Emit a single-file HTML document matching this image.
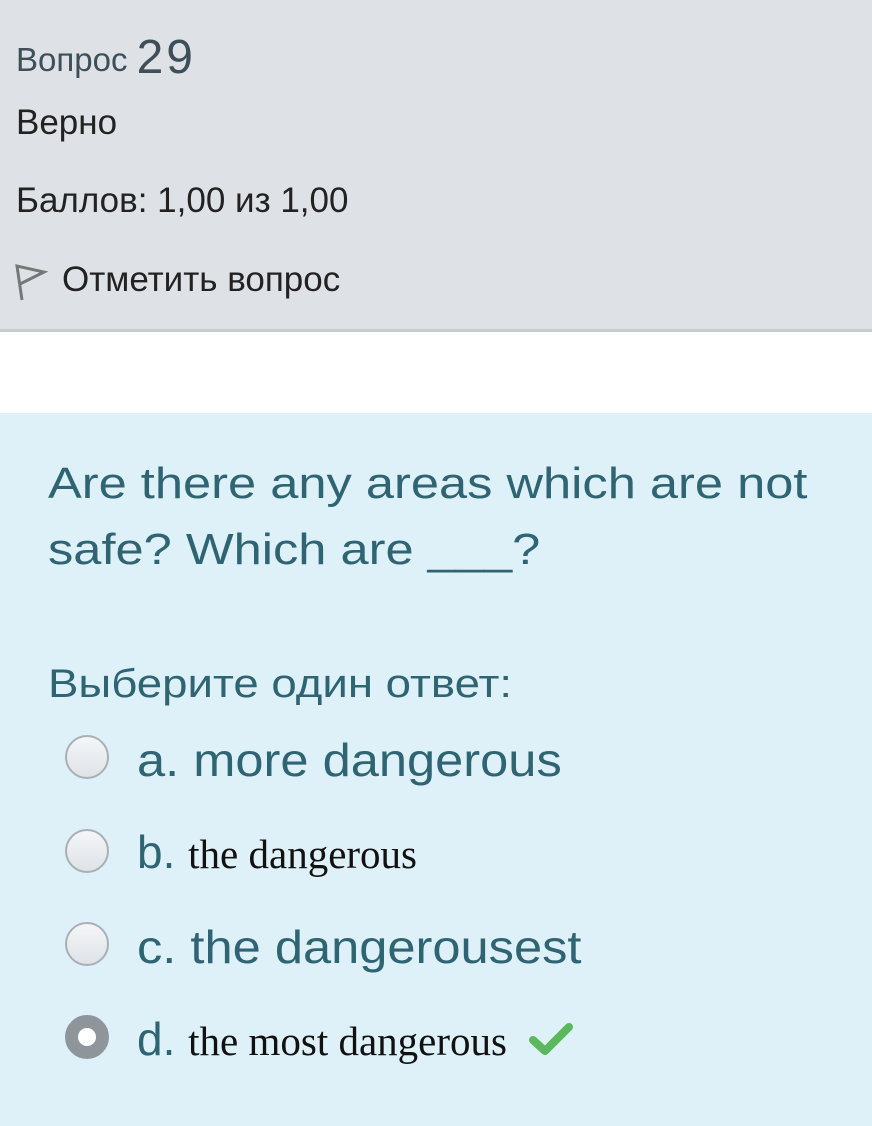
<!DOCTYPE html>
<html><head><meta charset="utf-8"><style>
*{margin:0;padding:0;box-sizing:border-box}
body{width:872px;height:1126px;overflow:hidden;background:#fff;font-family:"Liberation Sans",sans-serif;position:relative}
.hdr{position:absolute;left:0;top:0;width:872px;height:332px;background:#dee2e6;border-bottom:3px solid #c8ccd0}
.t{position:absolute;white-space:nowrap;line-height:1;transform-origin:left center}
.blue{position:absolute;left:0;top:413px;width:872px;height:713px;background:#def1f8}
.q{color:#2f6473}
.r{position:absolute;left:65px;width:44px;height:44px;border-radius:50%;border:2px solid #a9b0b5;background:linear-gradient(#f4f6f8,#dfe3e7)}
.serif{font-family:"Liberation Serif",serif;color:#111}
.w{display:inline-block;transform:scaleX(1.12);transform-origin:left center}
</style></head><body>
<div class="hdr"></div>
<div class="t" style="left:16px;top:32px;font-size:33px;color:#3e4f59">Вопрос <span style="font-size:48px;position:relative;top:2px;letter-spacing:3px">29</span></div>
<div class="t" style="left:16px;top:105px;font-size:35px;color:#222">Верно</div>
<div class="t" style="left:16px;top:183px;font-size:35px;color:#222">Баллов: 1,00 из 1,00</div>
<svg style="position:absolute;left:14px;top:262px" width="36" height="40" viewBox="0 0 36 40"><path d="M8 38 L3 4 L30 10 L6 22" fill="none" stroke="#777" stroke-width="3"/></svg>
<div class="t" style="left:62px;top:262px;font-size:35px;color:#222">Отметить вопрос</div>
<div class="blue"></div>
<div class="t q" style="left:48px;top:462px;font-size:44px;transform:scaleX(1.15)">Are there any areas which are not</div>
<div class="t q" style="left:48px;top:528px;font-size:44px;transform:scaleX(1.15)">safe? Which are ___?</div>
<div class="t q" style="left:48px;top:664px;font-size:40px;transform:scaleX(1.14)">Выберите один ответ:</div>
<div class="r" style="top:735px"></div>
<div class="t q" style="left:137px;top:737px;font-size:46px;transform:scaleX(1.1)">a. more dangerous</div>
<div class="r" style="top:829px"></div>
<div class="t q" style="left:137px;top:829px;font-size:46px">b. <span class="serif" style="font-size:41px">the dangerous</span></div>
<div class="r" style="top:922px"></div>
<div class="t q" style="left:137px;top:924px;font-size:46px;transform:scaleX(1.1)">c. the dangerousest</div>
<div class="r" style="top:1015px;background:#fff;border:13px solid #8e969c"></div>
<div class="t q" style="left:137px;top:1016px;font-size:46px">d. <span class="serif" style="font-size:41px">the most dangerous</span></div>
<svg style="position:absolute;left:528px;top:1022px" width="46" height="36" viewBox="0 0 46 36"><path d="M5 18 L17 29 L41 5" fill="none" stroke="#5cb85c" stroke-width="8" stroke-linejoin="round" stroke-linecap="round"/></svg>
</body></html>
